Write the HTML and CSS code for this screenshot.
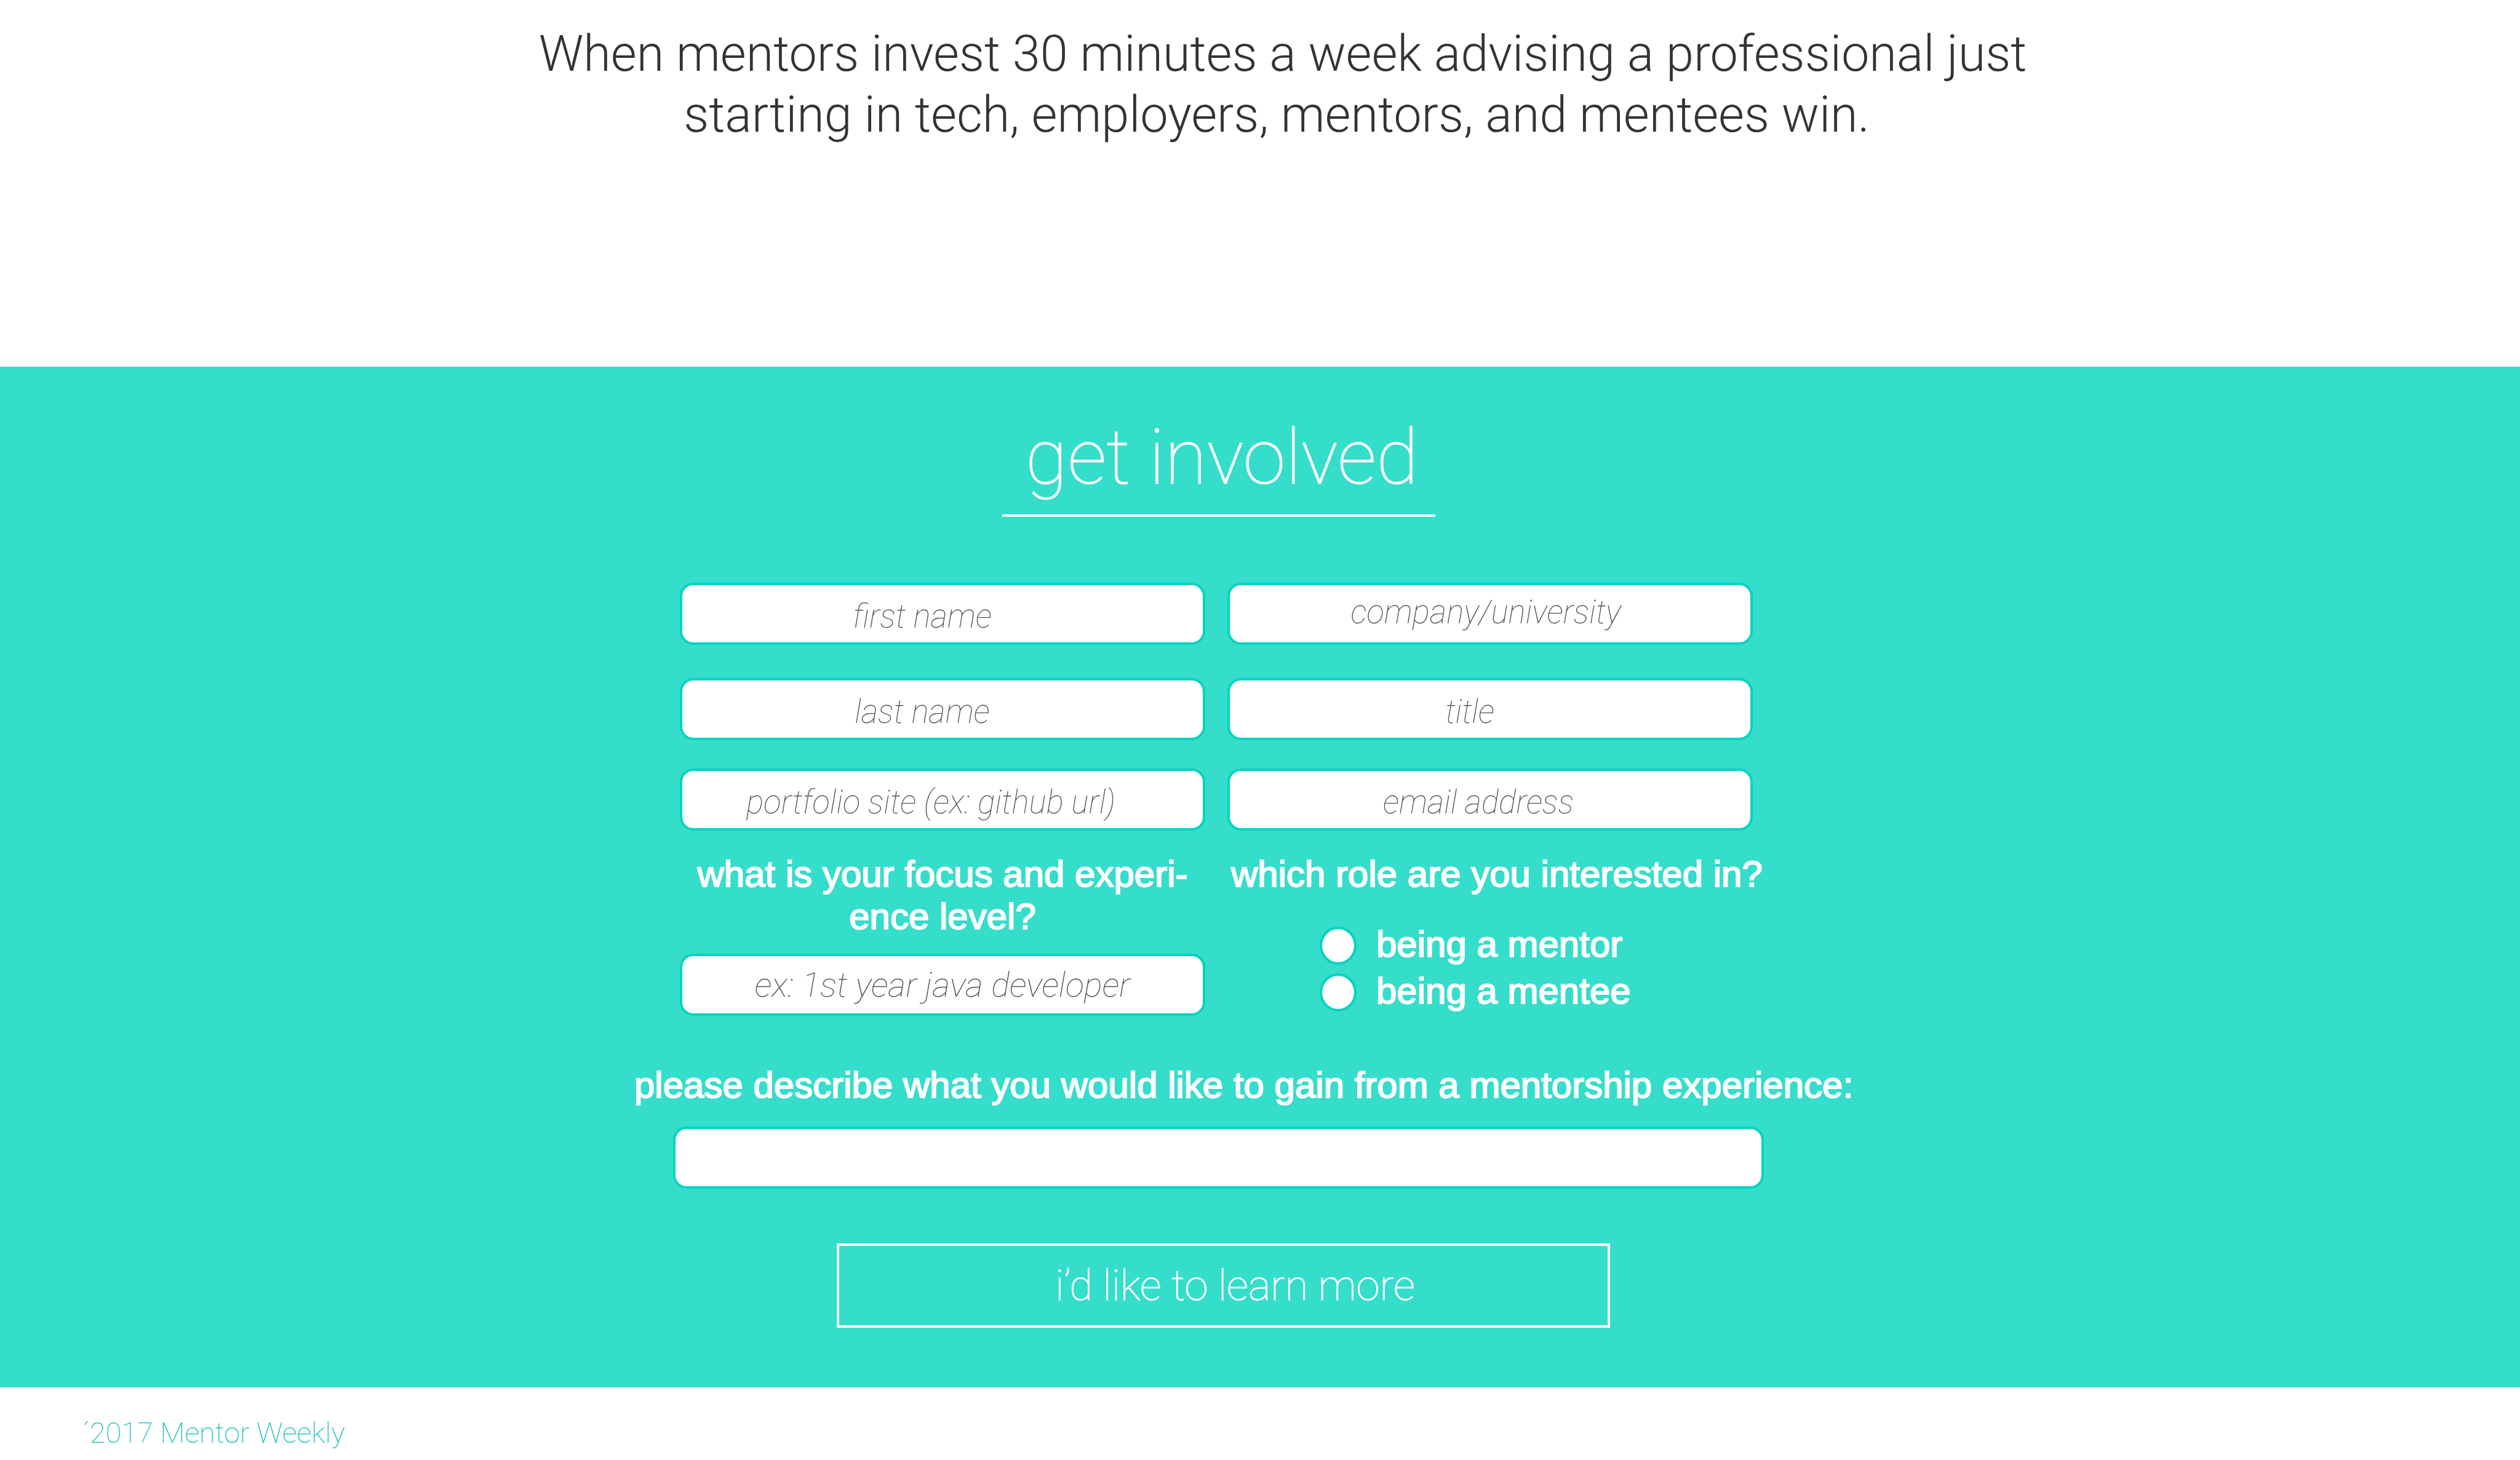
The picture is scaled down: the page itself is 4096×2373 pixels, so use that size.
FILE: index.html
```html
<!DOCTYPE html>
<html lang="en">
<head>
<meta charset="utf-8">
<title>Mentor Weekly</title>
<link rel="stylesheet" href="styles.css">
</head>
<body>
<header class="intro">
  <p class="intro-text">When mentors invest 30 minutes a week advising a professional just<br>starting in tech, employers, mentors, and mentees win.&nbsp;</p>
</header>

<main class="involved">
  <form class="form">
    <h1 class="title">get involved</h1>

    <div class="columns">
      <div class="column">
        <input class="field shift-wide" type="text" placeholder="first name" aria-label="first name">
        <input class="field shift-wide" type="text" placeholder="last name" aria-label="last name">
        <input class="field shift-narrow" type="text" placeholder="portfolio site (ex: github url)" aria-label="portfolio site">
        <label class="label" for="focus">what is your focus and experi-<br>ence level?</label>
        <input class="field field-large" id="focus" type="text" placeholder="ex: 1st year java developer">
      </div>
      <div class="column">
        <input class="field shift-up" type="text" placeholder="company/university" aria-label="company or university">
        <input class="field shift-wide" type="text" placeholder="title" aria-label="title">
        <input class="field shift-narrow" type="email" placeholder="email address" aria-label="email address">
        <fieldset class="roles">
          <legend class="label">which role are you interested in?</legend>
          <label class="role"><input class="radio" type="radio" name="role" value="mentor">being a mentor</label>
          <label class="role"><input class="radio" type="radio" name="role" value="mentee">being a mentee</label>
        </fieldset>
      </div>
    </div>

    <label class="label gain-label" for="gain">please describe what you would like to gain from a mentorship experience:</label>
    <input class="field gain" id="gain" type="text">

    <button class="submit" type="button">i’d like to learn more</button>
  </form>
</main>

<footer class="footer">´2017 Mentor Weekly</footer>
</body>
</html>
```
FILE: styles.css
```css
* {
  box-sizing: border-box;
}

body {
  margin: 0;
  background: #fff;
  font-family: Roboto, "Liberation Sans", sans-serif;
}

.intro {
  padding: 38px 0 360px 74px;
}

.intro-text {
  margin: 0;
  color: #333;
  font-size: 81px;
  font-weight: 300;
  line-height: 99px;
  text-align: center;
}

/* Sign-up section */
.involved {
  padding: 76px 54px 97px 0;
  background: #35ddcb;
  color: #fff;
}

.form {
  display: flex;
  flex-direction: column;
  align-items: flex-start;
  max-width: 1980px;
  margin: 0 auto;
}

.title {
  width: 704px;
  margin: 0 0 107px 598px;
  padding: 0 0 20px 10px;
  border-bottom: 4px solid #fff;
  font-size: 125px;
  font-weight: 100;
  line-height: 144px;
  text-align: center;
  -webkit-text-stroke: 1px #fff;
}

.columns {
  display: grid;
  grid-template-columns: 1fr 1fr;
  gap: 36px;
  width: 100%;
  max-width: 1818px;
  padding-left: 74px;
}

.column {
  display: flex;
  flex-direction: column;
  min-width: 0;
}

.field {
  width: 100%;
  height: 101px;
  padding: 0;
  border: 4px solid #00d4c0;
  border-radius: 22px;
  background: #fff;
  color: #555;
  font-family: inherit;
  font-size: 53px;
  font-style: italic;
  font-weight: 100;
  text-align: center;
}

.field::placeholder {
  color: #555;
  opacity: 1;
}

.field-large {
  font-size: 56px;
}

.shift-up {
  padding: 0 14px 6px 0;
}

.shift-wide {
  margin-bottom: 46px;
  padding: 8px 66px 0 0;
}

.shift-narrow {
  margin-bottom: 36px;
  padding: 8px 38px 0 0;
}

.column > .field:first-child {
  margin-bottom: 54px;
}

.label,
.role {
  font-family: "Liberation Sans", sans-serif;
  font-size: 60px;
  line-height: 69px;
  white-space: nowrap;
  -webkit-text-stroke: 2px #fff;
}

.label {
  padding: 0;
  text-align: center;
}

.column > .label {
  margin-bottom: 26px;
}

.roles {
  min-width: 0;
  margin: 0;
  padding: 2px 0 0 6px;
  border: 0;
}

.roles .label {
  margin-bottom: 43px;
}

.role {
  display: flex;
  gap: 32px;
  height: 76px;
  padding-left: 144px;
}

.radio {
  appearance: none;
  width: 60px;
  height: 62px;
  margin: 6px 0 0;
  border: 4px solid #00d4c0;
  border-radius: 50%;
  background: #fff;
}

.radio:checked {
  background: radial-gradient(#00d4c0 40%, #fff 42%);
}

.gain-label {
  margin: 77px 0 33px;
}

.gain {
  max-width: 1773px;
  margin-left: 63px;
}

.submit {
  width: 1257px;
  height: 137px;
  margin: 89px 0 0 329px;
  padding: 0 0 0 38px;
  border: 4px solid #fff;
  background: transparent;
  color: #fff;
  font-family: inherit;
  font-size: 69px;
  font-weight: 100;
  line-height: 81px;
  -webkit-text-stroke: 1px #fff;
}

.footer {
  padding: 46px 0 17px 134px;
  color: #00bdb2;
  font-size: 47px;
  font-weight: 100;
  line-height: 56px;
}
```
